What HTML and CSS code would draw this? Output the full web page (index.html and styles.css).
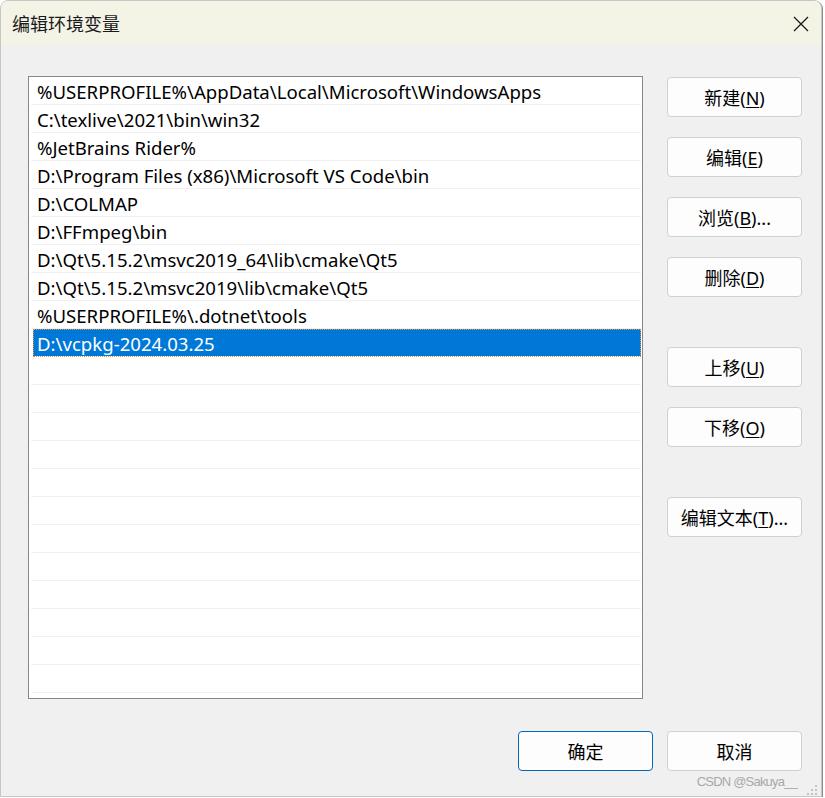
FILE: index.html
```html
<!DOCTYPE html>
<html lang="zh-CN">
<head>
    <meta charset="UTF-8">
    <meta name="viewport" content="width=device-width, initial-scale=1.0">
    <title>编辑环境变量</title>
    <link rel="stylesheet" href="styles.css">
</head>
<body>
    <div class="window">
        <!-- Title Bar -->
        <div class="titlebar">
            <span class="title">编辑环境变量</span>
            <svg class="close" width="16" height="16" viewBox="0 0 16 16">
                <path d="M1 1 L15 15 M15 1 L1 15" stroke="#1a1a1a" stroke-width="1.3" fill="none"/>
            </svg>
        </div>

        <div class="main">
            <!-- Path List -->
            <div class="list">
                <div class="row">%USERPROFILE%\AppData\Local\Microsoft\WindowsApps</div>
                <div class="row">C:\texlive\2021\bin\win32</div>
                <div class="row">%JetBrains Rider%</div>
                <div class="row">D:\Program Files (x86)\Microsoft VS Code\bin</div>
                <div class="row">D:\COLMAP</div>
                <div class="row">D:\FFmpeg\bin</div>
                <div class="row">D:\Qt\5.15.2\msvc2019_64\lib\cmake\Qt5</div>
                <div class="row">D:\Qt\5.15.2\msvc2019\lib\cmake\Qt5</div>
                <div class="row">%USERPROFILE%\.dotnet\tools</div>
                <div class="row selected">D:\vcpkg-2024.03.25</div>
                <div class="row"></div>
                <div class="row"></div>
                <div class="row"></div>
                <div class="row"></div>
                <div class="row"></div>
                <div class="row"></div>
                <div class="row"></div>
                <div class="row"></div>
                <div class="row"></div>
                <div class="row"></div>
                <div class="row"></div>
                <div class="row"></div>
            </div>

            <!-- Side Buttons -->
            <div class="side">
                <div class="group">
                    <button class="btn">新建(<u>N</u>)</button>
                    <button class="btn">编辑(<u>E</u>)</button>
                    <button class="btn">浏览(<u>B</u>)...</button>
                    <button class="btn">删除(<u>D</u>)</button>
                </div>
                <div class="group">
                    <button class="btn">上移(<u>U</u>)</button>
                    <button class="btn">下移(<u>O</u>)</button>
                </div>
                <div class="group">
                    <button class="btn">编辑文本(<u>T</u>)...</button>
                </div>
            </div>
        </div>

        <!-- Footer -->
        <div class="footer">
            <button class="btn primary">确定</button>
            <button class="btn">取消</button>
        </div>

        <div class="watermark">CSDN @Sakuya__</div>
        <svg class="grip" width="12" height="10" viewBox="0 0 12 10">
            <rect x="8" y="0" width="2" height="2" fill="#c4c4c4"/>
            <rect x="4" y="4" width="2" height="2" fill="#c4c4c4"/>
            <rect x="8" y="4" width="2" height="2" fill="#c4c4c4"/>
            <rect x="0" y="8" width="2" height="2" fill="#c4c4c4"/>
            <rect x="4" y="8" width="2" height="2" fill="#c4c4c4"/>
            <rect x="8" y="8" width="2" height="2" fill="#c4c4c4"/>
        </svg>
    </div>
</body>
</html>
```

FILE: styles.css
```css
/* General Styles */
body {
    margin: 0;
    background-color: #ffffff;
    font-family: "Noto Sans", "Noto Sans CJK SC", sans-serif;
    font-size: 18px;
    color: #000;
}

/* Window */
.window {
    position: relative;
    box-sizing: border-box;
    width: 822px;
    height: 797px;
    border: 1px solid #c6c6c6;
    border-radius: 8px 8px 0 0;
    background-color: #f0f0f0;
    box-shadow: 1px 1px 0 #8c8c8c;
    display: flex;
    flex-direction: column;
    overflow: hidden;
}

/* Title Bar */
.titlebar {
    height: 44px;
    flex-shrink: 0;
    background-color: #f3f3e6;
    display: flex;
    align-items: center;
    justify-content: space-between;
    padding: 0 12px 0 11px;
}

.title {
    font-family: "Noto Sans CJK SC", sans-serif;
    font-size: 18px;
    color: #1a1a1a;
}

.close {
    margin-top: 2px;
}

/* Main Area */
.main {
    display: flex;
    padding: 31px 0 0 27px;
}

.list {
    box-sizing: border-box;
    width: 615px;
    height: 623px;
    border: 1px solid #828790;
    background-color: #fff;
    padding: 0 1px 0 1px;
    overflow: hidden;
}

.row {
    box-sizing: border-box;
    height: 28px;
    padding-top: 3px;
    line-height: 24px;
    margin-left: 1px;
    padding-left: 6px;
    border-bottom: 1px solid #f0f0f0;
    white-space: nowrap;
    font-size: 18.6px;
}

.row.selected {
    margin-left: 3px;
    padding-left: 4px;
    background-color: #0078d7;
    color: #fff;
    border-bottom: 1px solid #ffffff;
    outline: 1px dotted #e09a3a;
    outline-offset: -1px;
}

/* Side Buttons */
.side {
    margin: 1px 0 0 24px;
    display: flex;
    flex-direction: column;
    gap: 50px;
}

.group {
    display: flex;
    flex-direction: column;
    gap: 20px;
}

.btn {
    box-sizing: border-box;
    width: 135px;
    height: 40px;
    border: 1px solid #d0d0d0;
    border-radius: 4px;
    background-color: #fdfdfd;
    font-family: "Noto Sans", "Noto Sans CJK SC", sans-serif;
    font-size: 18px;
    color: #000;
    padding: 0;
}

.btn u {
    text-underline-offset: 2px;
}

.btn.primary {
    border-color: #0067c0;
}

/* Footer */
.footer {
    display: flex;
    justify-content: flex-end;
    gap: 14px;
    padding: 32px 19px 0 0;
}

/* Watermark and grip sit over the frame */
.watermark {
    position: absolute;
    right: 24px;
    bottom: 7px;
    font-family: "Liberation Sans", sans-serif;
    font-size: 13px;
    letter-spacing: -0.8px;
    color: #a8a8a8;
}

.grip {
    position: absolute;
    right: 2px;
    bottom: 1px;
}
```
